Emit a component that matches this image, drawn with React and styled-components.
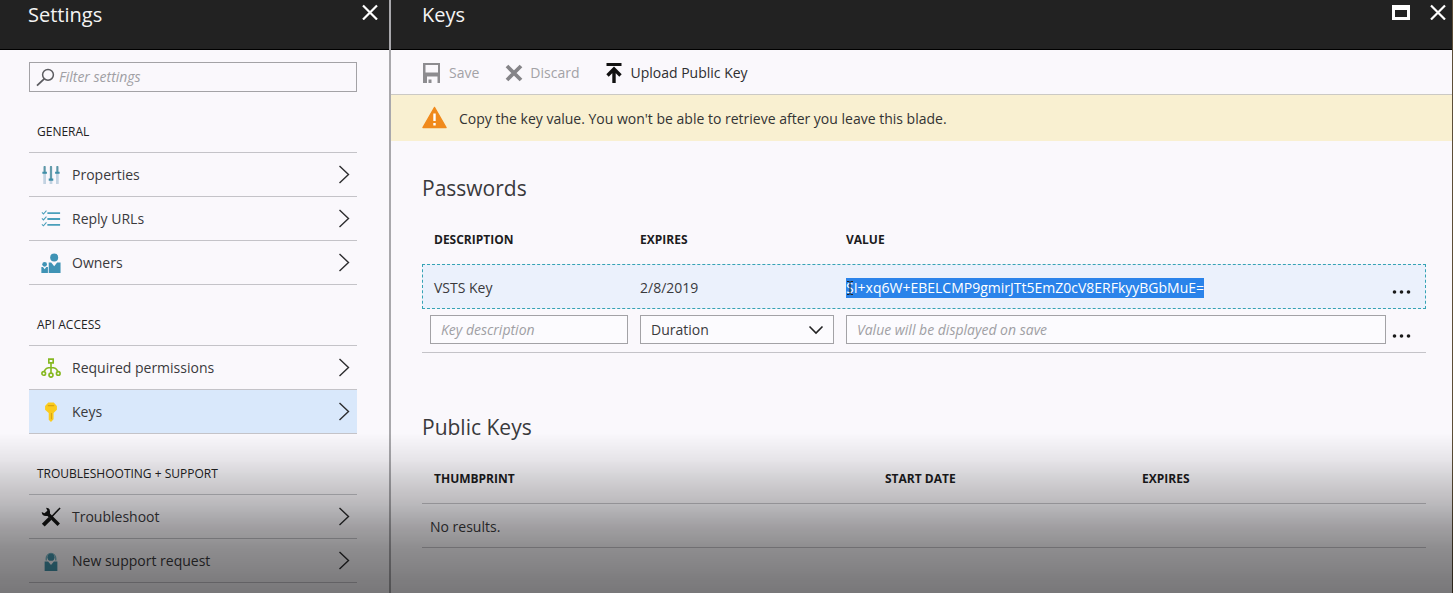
import React, { useState } from "react";
import styled, { createGlobalStyle, css } from "styled-components";

const FONT = '"Open Sans", "Noto Sans", sans-serif';

const GlobalStyle = createGlobalStyle`
  *, *::before, *::after { box-sizing: border-box; }
  body {
    margin: 0;
    background: #faf8fc;
    color: #3a3a3c;
    font-family: ${FONT};
    font-size: 14px;
    line-height: 20px;
  }
  button, input, select { font: inherit; color: inherit; }
`;

const Portal = styled.div`
  display: grid;
  grid-template-columns: 391px minmax(0, 1fr);
  min-height: 100vh;
  border-right: 1px solid #5c4e38;
`;

const Blade = styled.section`
  display: flex;
  flex-direction: column;
  min-width: 0;
  ${(p) => p.$divided && css`border-right: 2px solid #a9a8ac;`}
`;

const BladeHeader = styled.header`
  display: flex;
  justify-content: space-between;
  align-items: flex-start;
  height: 50px;
  padding: 0 ${(p) => p.$end}px 0 ${(p) => p.$start}px;
  background: #222;
  border-bottom: 1px solid #000;
  color: #f4f4f4;
`;

const BladeTitle = styled.h1`
  margin: 0;
  font-size: 20px;
  line-height: 30px;
  font-weight: 400;
`;

const WindowButtons = styled.div`
  display: flex;
  gap: 20px;
  padding-top: 4px;
`;

const IconButton = styled.button`
  display: flex;
  padding: 0;
  border: 0;
  background: none;
  cursor: pointer;
`;

const Menu = styled.nav`
  padding: 12px 32px 10px 29px;
`;

const SearchBox = styled.label`
  display: flex;
  align-items: center;
  gap: 4px;
  height: 30px;
  padding: 0 6px;
  border: 1px solid #a3a2a6;
`;

const fieldText = css`
  &::placeholder { color: #a09fa4; font-style: italic; opacity: 1; }
`;

const SearchInput = styled.input`
  flex: 1;
  min-width: 0;
  padding: 0;
  border: 0;
  outline: 0;
  background: none;
  font-size: 14px;
  ${fieldText}
`;

const MenuHeading = styled.h2`
  margin: 0;
  padding: 30px 8px 10px;
  font-size: 12px;
  line-height: 20px;
  font-weight: 400;
  color: #222;
`;

const MenuList = styled.ul`
  margin: 0;
  padding: 0;
  list-style: none;
  border-top: 1px solid #c4c3c8;
`;

const MenuLink = styled.a`
  display: flex;
  align-items: center;
  gap: 11px;
  height: 44px;
  padding: 0 7px 0 12px;
  border-bottom: 1px solid #c4c3c8;
  background: ${(p) => (p.$active ? "#d9e8fb" : "transparent")};
  color: inherit;
  text-decoration: none;
`;

const MenuLabel = styled.span`
  flex: 1;
`;

const Toolbar = styled.div`
  display: flex;
  align-items: center;
  gap: 26px;
  height: 45px;
  padding: 2px 31px 0;
  border-bottom: 1px solid #cbc9c4;
`;

const ToolButton = styled.button`
  display: flex;
  align-items: center;
  gap: 7px;
  padding: 0;
  border: 0;
  background: none;
  color: #2e2e30;
  &:disabled { color: #a3a2a6; }
`;

const Banner = styled.div`
  display: flex;
  align-items: center;
  gap: 12px;
  height: 46px;
  padding: 0 31px;
  background: #f9f0d1;
  color: #333;
`;

const BannerText = styled.p`
  margin: 0;
  padding-top: 2px;
`;

const Content = styled.div`
  display: flex;
  flex-direction: column;
  gap: 59px;
  padding: 32px 26px 45px 31px;
`;

const SectionTitle = styled.h2`
  margin: 0 0 13px;
  font-size: 21px;
  line-height: 30px;
  font-weight: 400;
  color: #3a3a3c;
`;

const Table = styled.table`
  width: 100%;
  table-layout: fixed;
  border-collapse: separate;
  border-spacing: 0;
`;

const Col = styled.col`
  width: ${(p) => (p.$w ? `${p.$w}px` : "auto")};
`;

const Th = styled.th`
  height: ${(p) => (p.$ruled ? 49 : 48)}px;
  padding: 0 0 0 12px;
  text-align: left;
  font-size: 12px;
  font-weight: 700;
  color: #1c1c1e;
  ${(p) => p.$ruled && css`border-bottom: 1px solid #c4c3c8;`}
`;

const KeyRow = styled.tr`
  height: 45px;
  background: #ebf1fc;
  outline: 1px dashed #35a3b5;
  outline-offset: -1px;
`;

const Td = styled.td`
  height: 44px;
  padding: 2px 0 0 ${(p) => (p.$inset ? 8 : 12)}px;
  white-space: nowrap;
  ${(p) => p.$ruled && css`border-bottom: 1px solid #c4c3c8;`}
`;

const FieldCell = styled(Td)`
  padding-top: 0;
  padding-bottom: 2px;
`;

const MoreCell = styled(Td)`
  padding: 10px 0 0 6px;
`;

const KeyValue = styled.span`
  position: relative;
  display: inline-block;
  background: #2a83ea;
  color: #fff;
`;

const TextCursor = styled.svg`
  position: absolute;
  left: 0;
  top: 2px;
`;

const Field = styled.input`
  display: block;
  width: 100%;
  height: 29px;
  padding: 0 10px;
  border: 1px solid #a3a2a6;
  border-radius: 0;
  background: #fcfbfe;
  ${fieldText}
`;

const SelectBox = styled.div`
  display: grid;
  align-items: center;
  > * { grid-area: 1 / 1; }
  > svg { justify-self: end; margin-right: 10px; pointer-events: none; }
`;

const Select = styled.select`
  appearance: none;
  width: 100%;
  height: 29px;
  padding: 0 10px;
  border: 1px solid #a3a2a6;
  border-radius: 0;
  background: #fcfbfe;
`;

const BottomShade = styled.div`
  position: fixed;
  inset: auto 0 0 0;
  height: 160px;
  pointer-events: none;
  background: linear-gradient(
    to bottom,
    rgba(0, 0, 0, 0) 0%,
    rgba(0, 0, 0, 0.08) 17%,
    rgba(0, 0, 0, 0.16) 29%,
    rgba(0, 0, 0, 0.25) 44%,
    rgba(0, 0, 0, 0.36) 59%,
    rgba(0, 0, 0, 0.43) 72%,
    rgba(0, 0, 0, 0.52) 100%
  );
`;

const CloseIcon = () => (
  <svg width="16" height="16" viewBox="0 0 16 16" stroke="#fff" strokeWidth="2.2" aria-hidden="true">
    <path d="M1 1.5l14 14M15 1.5l-14 14" />
  </svg>
);

const MaximizeIcon = () => (
  <svg width="18" height="16" viewBox="0 0 18 16" fill="#fff" aria-hidden="true">
    <path fillRule="evenodd" d="M0 1h18v15H0zM3 6v7h12V6z" />
  </svg>
);

const SearchIcon = () => (
  <svg width="19" height="19" viewBox="0 0 19 19" fill="none" stroke="#5b5b60" strokeWidth="1.5" aria-hidden="true">
    <circle cx="12" cy="6.8" r="5.4" />
    <path d="M8.2 10.8L1 17.6" strokeWidth="1.8" />
  </svg>
);

const Chevron = () => (
  <svg width="12" height="20" viewBox="0 0 12 20" fill="none" stroke="#2c2c2e" strokeWidth="1.4" aria-hidden="true">
    <path d="M1.5 1L10.5 9.5L1.5 18" />
  </svg>
);

const DownChevron = () => (
  <svg width="16" height="10" viewBox="0 0 16 10" fill="none" stroke="#222" strokeWidth="1.6" aria-hidden="true">
    <path d="M1.5 1.5L8 8L14.5 1.5" />
  </svg>
);

const icons = {
  properties: (
    <>
      <path d="M4 2v19M11 2v19M18 2v19" stroke="#c3d3e2" strokeWidth="3" />
      <path d="M4 1v8M11 1v15M18 1v8" stroke="#5b97a6" strokeWidth="2" />
      <path d="M1.5 8.5h5M8.5 16h5M15.5 8.5h5" stroke="#3f8ea8" strokeWidth="2.4" />
    </>
  ),
  replies: (
    <g fill="none" stroke="#4a9fbb">
      <path d="M7 4.500h14M7 11h14M7 17.500h14" strokeWidth="2" />
      <path d="M1 3.800l1.700 1.700L6 1.800M1 10.300l1.700 1.700L6 8.300M1 16.800l1.700 1.700L6 14.800" strokeWidth="1.200" />
    </g>
  ),
  owners: (
    <g fill="#3f93b5">
      <circle cx="14.5" cy="5" r="4.4" />
      <path d="M8.500 10.500h2.700l3.300 4 3.300-4H21.500V22H8.500z" />
      <circle cx="4" cy="12.500" r="2.600" />
      <path d="M.4 15.500h1.800L4 17.800l1.800-2.300h1.800V22H.4z" />
    </g>
  ),
  permissions: (
    <g fill="none" stroke="#86b822" strokeWidth="1.8">
      <path d="M8.600 1.200h4.800v4.200H8.600zM11 5.500v11M11 10.500C7 10.500 4.500 12 3.800 14.500M11 10.500c4 0 6.500 1.500 7.200 4" />
      <circle cx="3" cy="17" r="2" />
      <circle cx="11" cy="18.800" r="2.200" />
      <circle cx="19" cy="17" r="2" />
    </g>
  ),
  key: (
    <>
      <path d="M8 0.500h6L17.500 4.500v4L13.800 12V19L11 22 8.500 19.500V12L4.500 8.500v-4z" fill="#fbcb1d" />
      <path d="M7.500 4h7M11.500 12v7" stroke="#d9a514" strokeWidth="1.2" />
    </>
  ),
  tools: (
    <g stroke="#151515" fill="none">
      <path d="M6 6L19.500 19.500" strokeWidth="3.800" />
      <path d="M5.500 0.800A4.600 4.600 0 1 1 0.800 5.500L3.800 7 7 4z" fill="#151515" stroke="none" />
      <path d="M21 1L11 11.500" strokeWidth="1.700" />
      <path d="M10 12.500L2.500 20" strokeWidth="4.400" />
    </g>
  ),
  support: (
    <g fill="#4493aa">
      <path d="M5 8a6 6 0 0 1 12 0v2.500h-1.600V7.500a4.400 4.400 0 0 0-8.800 0v3H5z" fill="#7db9c6" />
      <circle cx="11" cy="6.800" r="4" />
      <path d="M4 11.500h3.800l3.200 3.800 3.200-3.800H18V22H4z" />
    </g>
  ),
};

const MenuIcon = ({ name }) => (
  <svg width="20" height="20" viewBox="0 0 22 22" aria-hidden="true">{icons[name]}</svg>
);

const SaveIcon = () => (
  <svg width="20" height="22" viewBox="0 0 20 22" fill="#8d8c90" aria-hidden="true">
    <path fillRule="evenodd" d="M1 1h17v20h-2.500v-6.500H5V21H1zM3.500 3v7.500H16V3z" />
    <path d="M6.500 17.500h3V21h-3z" />
  </svg>
);

const DiscardIcon = () => (
  <svg width="18" height="18" viewBox="0 0 18 18" stroke="#858488" strokeWidth="3.8" aria-hidden="true">
    <path d="M2 2l14 14M16 2L2 16" />
  </svg>
);

const UploadIcon = () => (
  <svg width="18" height="22" viewBox="0 0 18 22" aria-hidden="true">
    <path d="M1.500 1h15v3h-15z" fill="#111" />
    <path d="M9 21V8M2.500 13.500L9 7l6.500 6.500" fill="none" stroke="#111" strokeWidth="3.4" />
  </svg>
);

const WarningIcon = () => (
  <svg width="25" height="24" viewBox="0 0 25 24" aria-hidden="true">
    <path d="M12.500 1.500L24 21.500H1z" fill="#f08a1c" stroke="#f08a1c" strokeWidth="1.5" strokeLinejoin="round" />
    <path d="M12.500 7.500v7.500M12.500 17v2.600" stroke="#fff" strokeWidth="2.4" />
  </svg>
);

const MoreIcon = () => (
  <svg width="20" height="6" viewBox="0 0 20 6" fill="#1a1a1a" aria-hidden="true">
    <circle cx="2.5" cy="3" r="1.8" />
    <circle cx="9.5" cy="3" r="1.8" />
    <circle cx="16.5" cy="3" r="1.8" />
  </svg>
);

const MENU = [
  { title: "GENERAL", items: [["properties", "Properties"], ["replies", "Reply URLs"], ["owners", "Owners"]] },
  { title: "API ACCESS", items: [["permissions", "Required permissions"], ["key", "Keys"]] },
  { title: "TROUBLESHOOTING + SUPPORT", items: [["tools", "Troubleshoot"], ["support", "New support request"]] },
];

function SettingsBlade() {
  const [active, setActive] = useState("Keys");
  return (
    <Blade $divided>
      <BladeHeader $start={28} $end={11}>
        <BladeTitle>Settings</BladeTitle>
        <WindowButtons>
          <IconButton aria-label="Close settings"><CloseIcon /></IconButton>
        </WindowButtons>
      </BladeHeader>
      <Menu>
        <SearchBox>
          <SearchIcon />
          <SearchInput type="text" placeholder="Filter settings" aria-label="Filter settings" />
        </SearchBox>
        {MENU.map((group) => (
          <div key={group.title}>
            <MenuHeading>{group.title}</MenuHeading>
            <MenuList>
              {group.items.map(([icon, label]) => (
                <li key={label}>
                  <MenuLink href="#" $active={active === label} onClick={() => setActive(label)}>
                    <MenuIcon name={icon} />
                    <MenuLabel>{label}</MenuLabel>
                    <Chevron />
                  </MenuLink>
                </li>
              ))}
            </MenuList>
          </div>
        ))}
      </Menu>
    </Blade>
  );
}

function KeysBlade() {
  return (
    <Blade>
      <BladeHeader $start={31} $end={6}>
        <BladeTitle>Keys</BladeTitle>
        <WindowButtons>
          <IconButton aria-label="Maximize"><MaximizeIcon /></IconButton>
          <IconButton aria-label="Close keys"><CloseIcon /></IconButton>
        </WindowButtons>
      </BladeHeader>
      <Toolbar>
        <ToolButton disabled><SaveIcon />Save</ToolButton>
        <ToolButton disabled><DiscardIcon />Discard</ToolButton>
        <ToolButton><UploadIcon />Upload Public Key</ToolButton>
      </Toolbar>
      <Banner>
        <WarningIcon />
        <BannerText>Copy the key value. You won't be able to retrieve after you leave this blade.</BannerText>
      </Banner>
      <Content>
        <section>
          <SectionTitle>Passwords</SectionTitle>
          <Table>
            <colgroup><Col $w={206} /><Col $w={206} /><Col /><Col $w={40} /></colgroup>
            <thead>
              <tr><Th>DESCRIPTION</Th><Th>EXPIRES</Th><Th>VALUE</Th><Th aria-label="Actions" /></tr>
            </thead>
            <tbody>
              <KeyRow>
                <Td>VSTS Key</Td>
                <Td>2/8/2019</Td>
                <Td>
                  <KeyValue>
                    SI+xq6W+EBELCMP9gmirJTt5EmZ0cV8ERFkyyBGbMuE=
                    <TextCursor width="8" height="16" viewBox="0 0 8 16" fill="none" stroke="#222" aria-hidden="true">
                      <path d="M1 1.500h2.500M4.500 1.500H7M4 2v12M1 14.500h2.500M4.500 14.500H7" />
                    </TextCursor>
                  </KeyValue>
                </Td>
                <MoreCell><IconButton aria-label="More options for VSTS Key"><MoreIcon /></IconButton></MoreCell>
              </KeyRow>
              <tr>
                <FieldCell $ruled $inset><Field placeholder="Key description" aria-label="Key description" /></FieldCell>
                <FieldCell $ruled>
                  <SelectBox>
                    <Select aria-label="Duration"><option>Duration</option></Select>
                    <DownChevron />
                  </SelectBox>
                </FieldCell>
                <FieldCell $ruled><Field readOnly placeholder="Value will be displayed on save" aria-label="Value" /></FieldCell>
                <MoreCell $ruled><IconButton aria-label="More options for new key"><MoreIcon /></IconButton></MoreCell>
              </tr>
            </tbody>
          </Table>
        </section>
        <section>
          <SectionTitle>Public Keys</SectionTitle>
          <Table>
            <colgroup><Col /><Col $w={257} /><Col $w={296} /></colgroup>
            <thead>
              <tr><Th $ruled>THUMBPRINT</Th><Th $ruled>START DATE</Th><Th $ruled>EXPIRES</Th></tr>
            </thead>
            <tbody>
              <tr><Td $ruled $inset colSpan={3}>No results.</Td></tr>
            </tbody>
          </Table>
        </section>
      </Content>
    </Blade>
  );
}

export default function App() {
  return (
    <>
      <GlobalStyle />
      <Portal>
        <SettingsBlade />
        <KeysBlade />
      </Portal>
      <BottomShade />
    </>
  );
}
